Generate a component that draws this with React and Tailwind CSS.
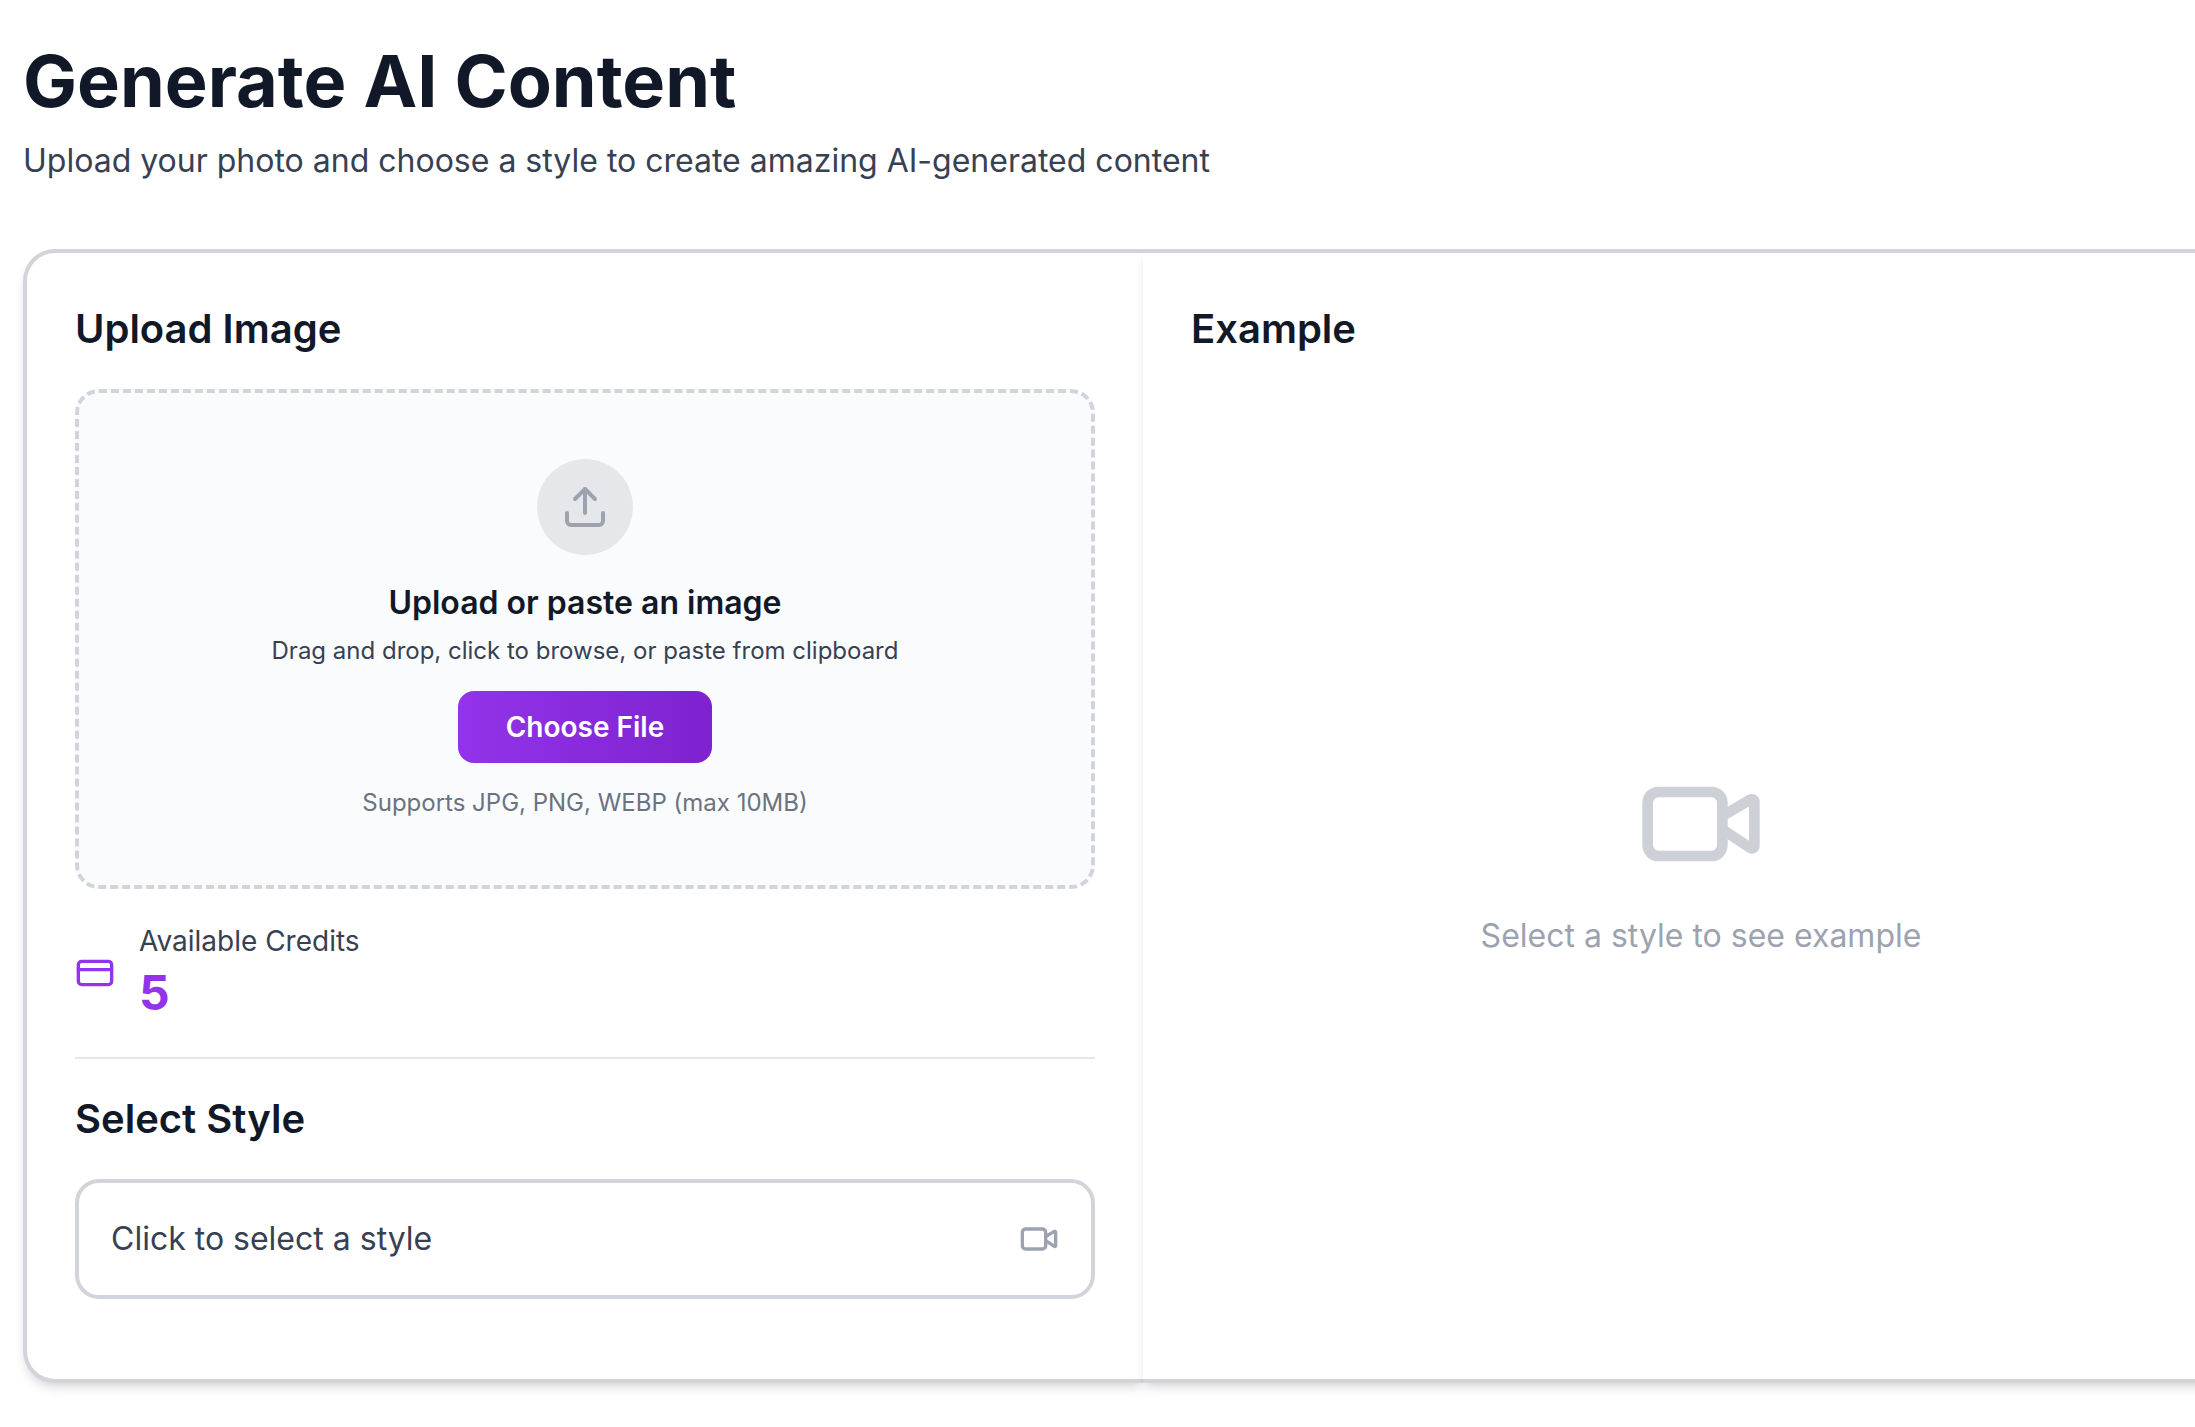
import { CreditCard, Upload, Video } from "lucide-react";

function PanelTitle({ children }) {
  return <h2 className="text-[40px]/[56px] font-semibold text-[#111827]">{children}</h2>;
}

function UploadArea() {
  return (
    <div className="flex flex-col items-center rounded-3xl border-4 border-dashed border-[#d1d5db] bg-[#fafbfd] px-8 py-[66px] text-center">
      <div className="flex size-24 items-center justify-center rounded-full bg-[#e5e7eb]">
        <Upload className="size-12 text-[#9ca3af]" aria-hidden="true" />
      </div>
      <h3 className="mt-6 text-[32px]/[48px] font-semibold text-[#111827]">Upload or paste an image</h3>
      <p className="mt-2 text-2xl/8 text-[#374151]">Drag and drop, click to browse, or paste from clipboard</p>
      <button
        type="button"
        className="mt-6 h-18 rounded-2xl bg-linear-to-r from-[#9333ea] to-[#7e22ce] px-12 text-[28px]/[40px] font-semibold text-white"
      >
        Choose File
      </button>
      <p className="mt-6 text-2xl/8 text-[#6b7280]">Supports JPG, PNG, WEBP (max 10MB)</p>
    </div>
  );
}

function Credits() {
  return (
    <div className="flex items-center gap-6 border-b-2 border-[#e5e7eb] pb-8">
      <CreditCard className="size-10 text-[#9333ea]" aria-hidden="true" />
      <div>
        <p className="text-[28px]/[40px] text-[#374151]">Available Credits</p>
        <p className="text-5xl/[64px] font-bold text-[#9333ea]">5</p>
      </div>
    </div>
  );
}

export default function App() {
  return (
    <div className="min-h-screen overflow-hidden bg-white font-['Inter',sans-serif]">
      <main className="-mr-[68px] pt-[41px] pb-11 pl-[23px]">
        <header>
          <h1 className="text-7xl/[80px] font-bold text-[#111827]">Generate AI Content</h1>
          <p className="mt-4 text-[32px]/[48px] text-[#374151]">
            Upload your photo and choose a style to create amazing AI-generated content
          </p>
        </header>

        <div className="mt-16 grid grid-cols-2">
          <section className="flex flex-col gap-8 rounded-l-[32px] border-4 border-r-0 border-[#d1d5db] bg-white px-12 pt-12 pb-20 shadow-[0_8px_12px_-2px_rgba(0,0,0,0.1),0_4px_8px_-4px_rgba(0,0,0,0.1)]">
            <PanelTitle>Upload Image</PanelTitle>
            <UploadArea />
            <Credits />
            <PanelTitle>Select Style</PanelTitle>
            <button
              type="button"
              className="flex items-center justify-between rounded-3xl border-4 border-[#d1d5db] bg-white p-8 text-left"
            >
              <span className="text-[32px]/[48px] text-[#374151]">Click to select a style</span>
              <Video className="size-10 text-[#9ca3af]" aria-hidden="true" />
            </button>
          </section>

          <section className="flex flex-col gap-8 rounded-r-[32px] border-4 border-l-0 border-[#d1d5db] bg-white p-12 shadow-[0_8px_12px_-2px_rgba(0,0,0,0.1),0_4px_8px_-4px_rgba(0,0,0,0.1)]">
            <PanelTitle>Example</PanelTitle>
            <div className="flex flex-1 flex-col items-center justify-center gap-6 text-[#9ca3af]">
              <Video className="size-32 opacity-50" aria-hidden="true" />
              <p className="text-[32px]/[48px]">Select a style to see example</p>
            </div>
          </section>
        </div>
      </main>
    </div>
  );
}
